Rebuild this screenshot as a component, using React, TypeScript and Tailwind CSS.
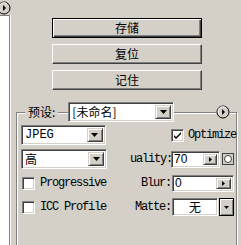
import React from 'react';

const cjk = '"Noto Sans CJK SC", "Liberation Sans", sans-serif';
const mono = '"Liberation Mono", "Noto Sans CJK SC", monospace';

function CircleArrow({ className = '' }: { className?: string }) {
  return (
    <svg width="14" height="14" viewBox="0 0 14 14" className={className}>
      <circle cx="7" cy="7" r="6" fill="#d4d0c8" stroke="#000" strokeWidth="1" />
      <path d="M3.5 9.5 A4.5 4.5 0 0 1 10 3" fill="none" stroke="#fff" strokeWidth="1" />
      <path d="M6 4 L9 7 L6 10 Z" fill="#000" />
    </svg>
  );
}

function DownArrow() {
  return (
    <svg width="7" height="4" viewBox="0 0 7 4">
      <path d="M0 0 H7 L3.5 4 Z" fill="#000" />
    </svg>
  );
}

function RightArrow() {
  return (
    <svg width="3" height="5" viewBox="0 0 3 5">
      <path d="M0 0 L3 2.5 L0 5 Z" fill="#000" />
    </svg>
  );
}

// raised 3D button face
const raised =
  'bg-[#d4d0c8] border border-t-[#d4d0c8] border-l-[#d4d0c8] border-b-[#404040] border-r-[#404040] shadow-[inset_1px_1px_0_#fff,inset_-1px_-1px_0_#808080]';
// sunken field
const sunken =
  'bg-white border border-t-[#808080] border-l-[#808080] border-b-white border-r-white shadow-[inset_1px_1px_0_#404040,inset_-1px_-1px_0_#d4d0c8]';

function Combo({ label, width, font }: { label: string; width: string; font: string }) {
  return (
    <div className={`flex items-stretch h-[20px] p-[2px] ${sunken} ${width}`}>
      <div className="flex-1 flex items-center pl-[1px] text-[12px] leading-none text-black" style={{ fontFamily: font }}>
        {label}
      </div>
      <div className={`w-[16px] flex items-center justify-center ${raised}`}>
        <DownArrow />
      </div>
    </div>
  );
}

function Check({ checked = false }: { checked?: boolean }) {
  return (
    <div className={`w-[13px] h-[13px] flex items-center justify-center ${sunken}`}>
      {checked && (
        <svg width="7" height="7" viewBox="0 0 7 7">
          <path d="M0 3 L0 5 L2 7 L7 2 L7 0 L2 5 Z" fill="#000" />
        </svg>
      )}
    </div>
  );
}

function PushButton({ label, isDefault = false }: { label: string; isDefault?: boolean }) {
  const cls = isDefault
    ? 'border border-black shadow-[inset_1px_1px_0_#fff,inset_-1px_-1px_0_#404040,inset_-2px_-2px_0_#808080]'
    : 'border border-t-white border-l-white border-b-[#404040] border-r-[#404040] shadow-[inset_-1px_-1px_0_#808080]';
  return (
    <div
      className={`w-[150px] h-[20px] flex items-center justify-center bg-[#d4d0c8] text-[12px] text-black ${cls}`}
      style={{ fontFamily: cjk }}
    >
      {label}
    </div>
  );
}

export default function App() {
  return (
    <div className="w-[241px] h-[245px] overflow-hidden bg-[#d4d0c8] flex flex-col select-none">
      {/* top icon */}
      <div className="h-[17px] pt-[1px] ml-[-3px]">
        <CircleArrow />
      </div>

      <div className="flex flex-1">
        {/* left strip */}
        <div className="w-[10px] border-t border-r border-t-[#808080] border-r-[#808080] shadow-[1px_0_0_#fff] bg-white" />

        <div className="flex-1 flex flex-col">
          {/* buttons */}
          <div className="flex flex-col gap-[6px] ml-[42px] mt-[3px]">
            <PushButton label="存储" isDefault />
            <PushButton label="复位" />
            <PushButton label="记住" />
          </div>

          {/* group box */}
          <div className="relative ml-[6px] mt-[22px] w-[221px] h-[140px] border border-[#808080] shadow-[inset_1px_1px_0_#fff,1px_1px_0_#fff] pl-[4px] pt-[12px]">
            <div className="absolute left-[8px] top-[-11px] flex items-center gap-[10px]">
              <span className="bg-[#d4d0c8] px-[3px] text-[12px] text-black" style={{ fontFamily: cjk }}>
                预设:
              </span>
              <Combo label="[未命名]" width="w-[106px]" font={cjk} />
            </div>
            <div className="absolute right-[6px] top-[-8px] bg-[#d4d0c8]">
              <CircleArrow />
            </div>

            <div className="flex flex-col">
              {/* row 1 */}
              <div className="flex items-center h-[20px]">
                <Combo label="JPEG" width="w-[86px]" font={mono} />
                <div className="ml-[65px] flex items-center gap-[4px]">
                  <Check checked />
                  <span className="text-[12px] tracking-[-1.2px] text-black whitespace-nowrap" style={{ fontFamily: mono }}>
                    Optimize
                  </span>
                </div>
              </div>

              {/* row 2 */}
              <div className="flex items-center h-[20px] mt-[4px]">
                <Combo label="高" width="w-[86px]" font={cjk} />
                <span className="ml-[23px] w-[40px] text-[12px] tracking-[-1.2px] text-black" style={{ fontFamily: mono }}>
                  uality:
                </span>
                <div className={`ml-[1px] w-[49px] h-[17px] flex items-stretch p-[2px] ${sunken}`}>
                  <span className="flex-1 flex items-center text-[12px] leading-none text-black" style={{ fontFamily: '"Liberation Sans", sans-serif' }}>
                    70
                  </span>
                  <div className={`w-[14px] flex items-center justify-center ${raised}`}>
                    <RightArrow />
                  </div>
                </div>
                <div className="ml-[2px] w-[12px] h-[12px] border border-[#404040] bg-[#d4d0c8] flex items-center justify-center">
                  <div className="w-[8px] h-[8px] rounded-full border border-[#404040] bg-white" />
                </div>
              </div>

              {/* row 3 */}
              <div className="flex items-center h-[20px] mt-[4px]">
                <div className="w-[120px] flex items-center gap-[5px] pl-[1px]">
                  <Check />
                  <span className="text-[12px] tracking-[-1.2px] text-black" style={{ fontFamily: mono }}>
                    Progressive
                  </span>
                </div>
                <span className="w-[30px] text-right text-[12px] tracking-[-1.2px] text-black" style={{ fontFamily: mono }}>
                  Blur:
                </span>
                <div className={`ml-[1px] w-[62px] h-[17px] flex items-stretch p-[2px] ${sunken}`}>
                  <span className="flex-1 flex items-center text-[12px] leading-none text-black" style={{ fontFamily: '"Liberation Sans", sans-serif' }}>
                    0
                  </span>
                  <div className={`w-[15px] flex items-center justify-center ${raised}`}>
                    <RightArrow />
                  </div>
                </div>
              </div>

              {/* row 4 */}
              <div className="flex items-center h-[20px] mt-[4px]">
                <div className="w-[112px] flex items-center gap-[5px] pl-[1px]">
                  <Check />
                  <span className="text-[12px] tracking-[-1.2px] text-black whitespace-nowrap" style={{ fontFamily: mono }}>
                    ICC Profile
                  </span>
                </div>
                <span className="w-[38px] text-right text-[12px] tracking-[-1.2px] text-black" style={{ fontFamily: mono }}>
                  Matte:
                </span>
                <div className={`ml-[1px] w-[46px] h-[18px] flex items-center justify-center text-[12px] text-black ${sunken}`} style={{ fontFamily: cjk }}>
                  无
                </div>
                <div className="ml-[1px] w-[15px] h-[18px] border border-black bg-[#d4d0c8] shadow-[inset_1px_1px_0_#fff,inset_-1px_-1px_0_#808080] flex items-center justify-center">
                  <svg width="5" height="3" viewBox="0 0 5 3">
                    <path d="M0 0 H5 L2.5 3 Z" fill="#000" />
                  </svg>
                </div>
              </div>
            </div>
          </div>
        </div>
      </div>
    </div>
  );
}
